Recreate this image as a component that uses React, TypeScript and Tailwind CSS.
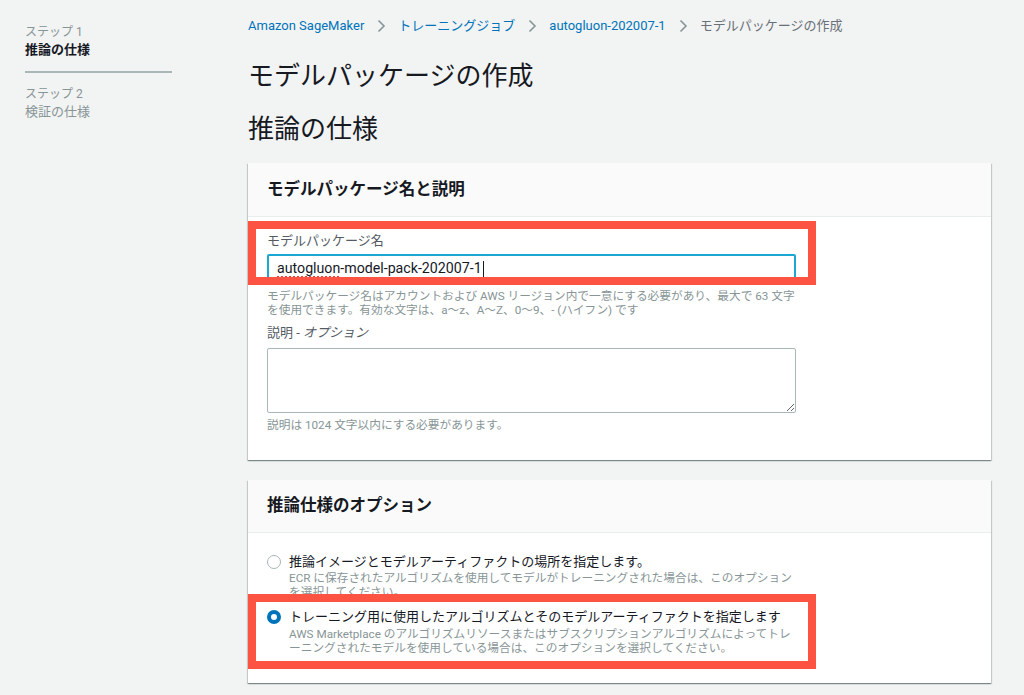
import React from "react";

const cardShadow =
  "shadow-[0_1px_1px_0_rgba(0,28,36,0.3),1px_1px_1px_0_rgba(0,28,36,0.15),-1px_1px_1px_0_rgba(0,28,36,0.15)]";

function Chevron() {
  return (
    <svg width="10" height="14" viewBox="0 0 10 14" className="mx-[12px] shrink-0">
      <path d="M2.5 1.5 L8 7 L2.5 12.5" fill="none" stroke="#879596" strokeWidth="1.6" />
    </svg>
  );
}

export default function App() {
  return (
    <div className="w-[1024px] h-[695px] overflow-hidden bg-[#f2f3f3] text-[#16191f] font-['Roboto','Noto_Sans_CJK_JP',sans-serif] flex">
      {/* Sidebar */}
      <aside className="w-[248px] shrink-0 pl-[25px] pt-[23px]">
        <div className="text-[12px] leading-[18px] text-[#879596]">ステップ 1</div>
        <div className="text-[13px] leading-[18px] font-bold text-[#16191f]">推論の仕様</div>
        <div className="mt-[12px] w-[147px] h-[2px] bg-[#aab7b8]" />
        <div className="mt-[12px] text-[12px] leading-[18px] text-[#879596]">ステップ 2</div>
        <div className="text-[13px] leading-[18px] text-[#879596]">検証の仕様</div>
      </aside>

      {/* Main */}
      <main className="w-[743px] shrink-0 pt-[17px]">
        <nav className="flex items-center text-[13px] leading-[18px]">
          <span className="text-[#0073bb]">Amazon SageMaker</span>
          <Chevron />
          <span className="text-[#0073bb]">トレーニングジョブ</span>
          <Chevron />
          <span className="text-[#0073bb]">autogluon-202007-1</span>
          <Chevron />
          <span className="text-[#687078]">モデルパッケージの作成</span>
        </nav>

        <h1 className="mt-[24px] text-[26px] leading-[34px] font-normal text-[#16191f]">
          モデルパッケージの作成
        </h1>
        <h2 className="mt-[19px] text-[26px] leading-[34px] font-normal text-[#16191f]">推論の仕様</h2>

        {/* Card 1 */}
        <section className={`relative mt-[17px] bg-white ${cardShadow}`}>
          <div className="h-[54px] px-[19px] flex items-center bg-[#fafafa] border-b border-[#eaeded]">
            <h3 className="text-[16.5px] font-bold leading-[22px]">モデルパッケージ名と説明</h3>
          </div>
          <div className="px-[19px] pt-[15px] pb-[28px]">
            <div className="w-[529px]">
              <div className="text-[13px] leading-[18px] text-[#545b64]">モデルパッケージ名</div>
              <div className="mt-[4px] h-[30px] border-2 border-[#1ca6d4] rounded-[2px] flex items-center pl-[8px] text-[14.2px] text-[#16191f]">
                <span className="underline decoration-dotted decoration-[#e0413a] decoration-2 underline-offset-[3px]">
                  autogluon
                </span>
                <span>-model-pack-202007-1</span>
                <span className="ml-[1px] w-[1px] h-[17px] bg-[#16191f]" />
              </div>
              <div className="mt-[5px] text-[11.7px] leading-[14px] text-[#879596] whitespace-nowrap">
                モデルパッケージ名はアカウントおよび AWS リージョン内で一意にする必要があり、最大で 63 文字
                <br />
                を使用できます。有効な文字は、a〜z、A〜Z、0〜9、- (ハイフン) です
              </div>
              <div className="mt-[7px] text-[13px] leading-[18px] text-[#545b64]">
                説明 - <span className="italic">オプション</span>
              </div>
              <textarea
                className="mt-[6px] block w-[529px] h-[65px] border border-[#aab7b8] rounded-[2px] bg-white resize-y outline-none"
                defaultValue=""
              />
              <div className="mt-[5px] text-[11.7px] leading-[14px] text-[#879596]">
                説明は 1024 文字以内にする必要があります。
              </div>
            </div>
          </div>
          {/* annotation */}
          <div className="absolute left-0 top-[58px] w-[568px] h-[64px] border-[8px] border-[#fd5342] pointer-events-none" />
        </section>

        {/* Card 2 */}
        <section className={`relative mt-[20px] bg-white ${cardShadow}`}>
          <div className="h-[53px] px-[19px] flex items-center bg-[#fafafa] border-b border-[#eaeded]">
            <h3 className="text-[16.5px] font-bold leading-[22px]">推論仕様のオプション</h3>
          </div>
          <div className="px-[19px] pt-[20px] pb-[28px]">
            <div className="flex gap-[8px]">
              <div className="h-[18px] flex items-center">
                <span className="block w-[14px] h-[14px] rounded-full border border-[#aab7b8] bg-white" />
              </div>
              <div>
                <div className="text-[13px] leading-[18px] text-[#16191f]">
                  推論イメージとモデルアーティファクトの場所を指定します。
                </div>
                <div className="text-[11.7px] leading-[14px] text-[#879596] whitespace-nowrap">
                  ECR に保存されたアルゴリズムを使用してモデルがトレーニングされた場合は、このオプション
                  <br />
                  を選択してください。
                </div>
              </div>
            </div>
            <div className="mt-[9px] flex gap-[8px]">
              <div className="h-[18px] flex items-center">
                <span className="block w-[14px] h-[14px] rounded-full border-[4px] border-[#0073bb] bg-white" />
              </div>
              <div>
                <div className="text-[13px] leading-[18px] text-[#16191f]">
                  トレーニング用に使用したアルゴリズムとそのモデルアーティファクトを指定します
                </div>
                <div className="mt-[1px] text-[11.7px] leading-[14px] text-[#879596] whitespace-nowrap">
                  AWS Marketplace のアルゴリズムリソースまたはサブスクリプションアルゴリズムによってトレ
                  <br />
                  ーニングされたモデルを使用している場合は、このオプションを選択してください。
                </div>
              </div>
            </div>
          </div>
          {/* annotation */}
          <div className="absolute left-0 top-[114px] w-[568px] h-[75px] border-[8px] border-[#fd5342] pointer-events-none" />
        </section>
      </main>
    </div>
  );
}
